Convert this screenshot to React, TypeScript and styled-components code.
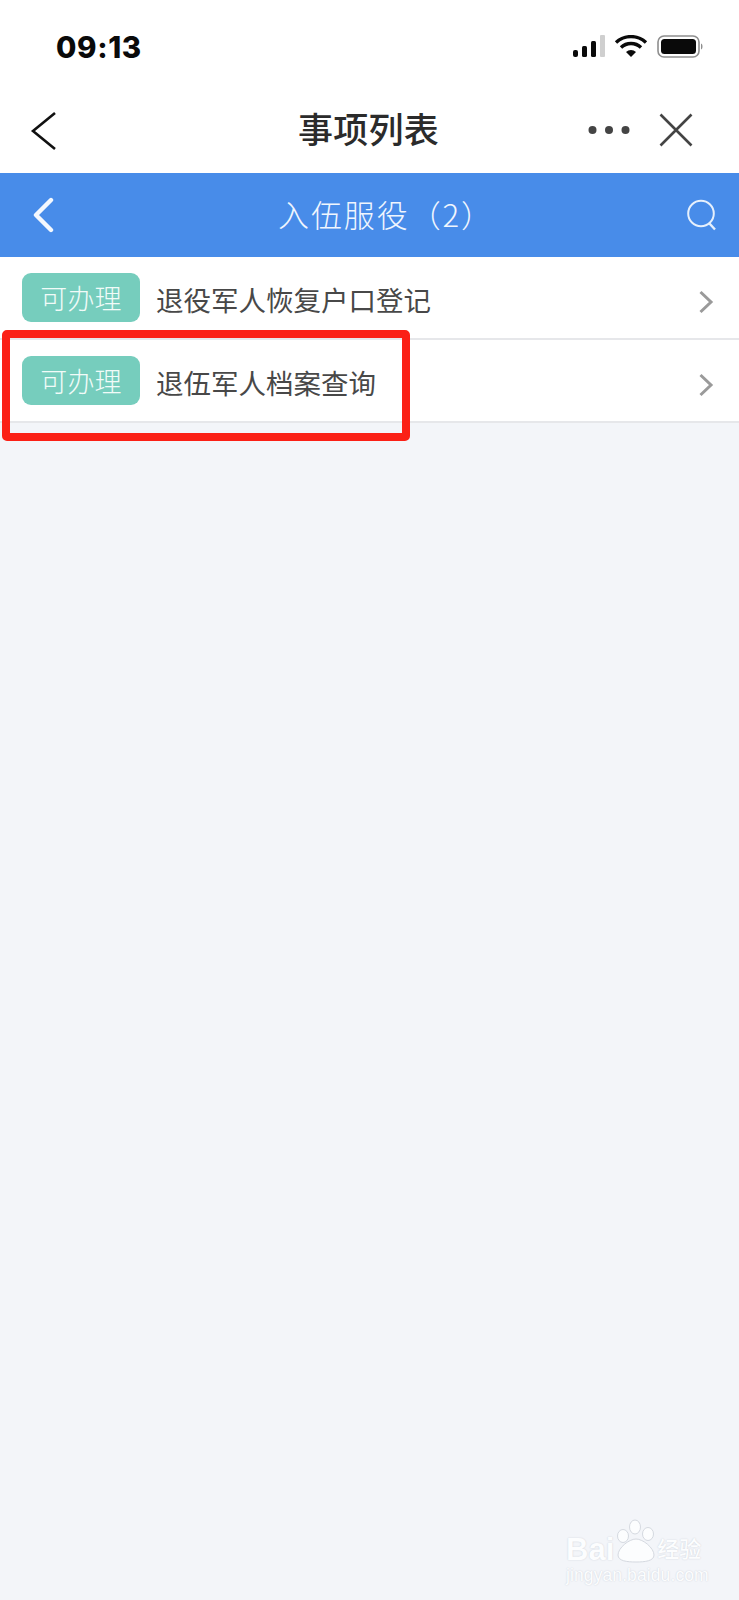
import React from "react";
import styled, { createGlobalStyle } from "styled-components";

const Global = createGlobalStyle`
  html, body { margin: 0; padding: 0; background: #f3f5f9; }
  #root { min-height: 1600px; }
`;
const CJK = `"Noto Sans CJK SC", "Noto Sans", sans-serif`;

const Page = styled.div`
  position: relative;
  width: 739px;
  height: 1600px;
  overflow: hidden;
  background: #f3f5f9;
  font-family: ${CJK};
`;
const StatusBar = styled.div`
  height: 88px;
  background: #fff;
  display: flex;
  align-items: flex-start;
  justify-content: space-between;
  padding: 29px 34px 0 56px;
  box-sizing: border-box;
`;
const Clock = styled.span`
  font-family: "Inter", "Liberation Sans", sans-serif;
  font-weight: 800;
  font-size: 29.5px;
  line-height: 36px;
  letter-spacing: 0.6px;
  color: #0a0a0a;
`;
const StatusIcons = styled.svg`
  width: 132px;
  height: 26px;
  margin-top: 6px;
  display: block;
`;
const NavBar = styled.div`
  height: 85px;
  background: #fff;
  display: grid;
  grid-template-columns: 1fr auto 1fr;
  align-items: center;
  padding: 0 46px 0 30px;
`;
const NavTitle = styled.h1`
  margin: -6px 0 0 14px;
  font-size: 35px;
  font-weight: 500;
  line-height: 44px;
  color: #2b2b2b;
  letter-spacing: 0.3px;
`;
const NavRight = styled.div`
  display: flex;
  justify-content: flex-end;
  align-items: center;
  gap: 29px;
  margin-top: -2px;
`;
const Glyph = styled.svg`
  display: block;
  flex: none;
`;
const Header = styled.div`
  height: 84px;
  background: #488ce9;
  display: grid;
  grid-template-columns: 1fr auto 1fr;
  align-items: center;
  padding: 0 21px 0 32px;
  box-sizing: border-box;
`;
const HeaderTitle = styled.h2`
  margin: -3px 0 0 22px;
  font-size: 31px;
  font-weight: 300;
  line-height: 42px;
  color: #f0f6fe;
  letter-spacing: 1.9px;
`;
const HeaderRight = styled.div`
  display: flex;
  justify-content: flex-end;
`;
const List = styled.div`
  display: flex;
  flex-direction: column;
`;
const Row = styled.div`
  height: 83px;
  box-sizing: border-box;
  background: #fff;
  border-bottom: 2px solid #e6e7ea;
  display: flex;
  align-items: center;
  padding: 0 25px 0 22px;
`;
const Badge = styled.span`
  width: 118px;
  height: 49px;
  border-radius: 9px;
  background: #76cdbd;
  color: #f1fbf8;
  font-size: 27px;
  font-weight: 300;
  line-height: 49px;
  padding-bottom: 1px;
  box-sizing: border-box;
  text-align: center;
  flex: none;
  letter-spacing: 0.2px;
`;
const RowLabel = styled.span`
  margin: 3px 0 0 16px;
  flex: 1;
  font-size: 27.5px;
  font-weight: 400;
  line-height: 40px;
  color: #484848;
`;
const ChevronBox = styled.svg`
  display: block;
  flex: none;
  margin-top: 9px;
`;
const Highlight = styled.div`
  position: absolute;
  left: 2px;
  top: 330px;
  width: 408px;
  height: 111px;
  box-sizing: border-box;
  border: 8px solid #fb2016;
  border-radius: 5px;
`;
const Watermark = styled.div`
  position: absolute;
  left: 566px;
  top: 1519px;
  width: 146px;
  color: #fcfdfe;
  text-shadow: 0 0 1.5px #c6cbd4;
`;
const WatermarkMain = styled.div`
  display: flex;
  align-items: flex-end;
  font-family: "Liberation Sans", sans-serif;
  font-weight: 700;
  font-size: 31px;
  line-height: 27px;
  height: 44px;
`;
const WatermarkCn = styled.span`
  font-family: ${CJK};
  font-size: 22px;
  line-height: 32px;
  font-weight: 500;
  margin-left: -1px;
`;
const WatermarkUrl = styled.div`
  font-family: "Liberation Sans", sans-serif;
  font-size: 17.5px;
  line-height: 20px;
  letter-spacing: 0.1px;
  margin-top: 2px;
  white-space: nowrap;
`;

const Chevron = () => (
  <ChevronBox width="16" height="24" viewBox="0 0 16 24" fill="none">
    <path d="M2.5 2 13 12 2.5 22" stroke="#9a9a9a" strokeWidth="3" />
  </ChevronBox>
);

const items = ["退役军人恢复户口登记", "退伍军人档案查询"];

export default function App() {
  return (
    <Page>
      <Global />
      <StatusBar>
        <Clock>09:13</Clock>
        <StatusIcons viewBox="0 0 132 26">
          <rect x="0" y="15" width="5" height="7" rx="2" fill="#0a0a0a" />
          <rect x="9" y="11" width="5" height="11" rx="1.5" fill="#0a0a0a" />
          <rect x="18" y="6" width="5" height="16" rx="1.5" fill="#0a0a0a" />
          <rect x="27" y="0" width="5" height="22" rx="1" fill="#cfcfcf" />
          <path d="M43 7.5a22 22 0 0 1 30 0" fill="none" stroke="#0a0a0a" strokeWidth="3.4" />
          <path d="M48 12.5a14.5 14.5 0 0 1 20 0" fill="none" stroke="#0a0a0a" strokeWidth="3.4" />
          <path d="M53 17a7.5 7.5 0 0 1 10 0l-5 5z" fill="#0a0a0a" />
          <rect x="85" y="1" width="41" height="21" rx="6" fill="none" stroke="#8e8e8e" strokeWidth="1.6" />
          <rect x="88" y="4" width="35" height="15" rx="3.5" fill="#0a0a0a" />
          <path d="M128 8.5c2 .5 2 5.5 0 6z" fill="#8e8e8e" />
        </StatusIcons>
      </StatusBar>
      <NavBar>
        <Glyph width="26" height="40" viewBox="0 0 26 40" fill="none">
          <path d="M25 2 3 20l22 18" stroke="#111" strokeWidth="2.6" />
        </Glyph>
        <NavTitle>事项列表</NavTitle>
        <NavRight>
          <Glyph width="42" height="12" viewBox="0 0 42 12" fill="#444">
            <circle cx="4.5" cy="6" r="4" />
            <circle cx="21" cy="6" r="4" />
            <circle cx="37.5" cy="6" r="4" />
          </Glyph>
          <Glyph width="34" height="34" viewBox="0 0 34 34" fill="none">
            <path d="M1.5 1.5l31 31M32.5 1.5l-31 31" stroke="#444" strokeWidth="2.6" />
          </Glyph>
        </NavRight>
      </NavBar>
      <Header>
        <Glyph width="22" height="36" viewBox="0 0 22 36" fill="none">
          <path d="M19 3 4 18l15 15" stroke="#f4f8fe" strokeWidth="4.4" strokeLinecap="round" strokeLinejoin="round" />
        </Glyph>
        <HeaderTitle>入伍服役（2）</HeaderTitle>
        <HeaderRight>
          <Glyph width="32" height="32" viewBox="0 0 32 32" fill="none">
            <circle cx="15" cy="14.5" r="12.8" stroke="#e6f0fc" strokeWidth="2" />
            <path d="M23 24l6 6.5" stroke="#e6f0fc" strokeWidth="2.4" />
          </Glyph>
        </HeaderRight>
      </Header>
      <List>
        {items.map((t) => (
          <Row key={t}>
            <Badge>可办理</Badge>
            <RowLabel>{t}</RowLabel>
            <Chevron />
          </Row>
        ))}
      </List>
      <Highlight />
      <Watermark>
        <WatermarkMain>
          Bai
          <Glyph width="44" height="44" viewBox="0 0 44 44" fill="#fcfdfe" stroke="#d5d9e0" strokeWidth="1">
            <ellipse cx="9" cy="17" rx="5.5" ry="6.5" />
            <ellipse cx="21" cy="8" rx="5.5" ry="7" />
            <ellipse cx="34" cy="15" rx="5.5" ry="6.5" />
            <path d="M22 20c7 0 18 9 18 16 0 6-9 7-18 7S4 42 4 36c0-7 11-16 18-16z" />
          </Glyph>
          <WatermarkCn>经验</WatermarkCn>
        </WatermarkMain>
        <WatermarkUrl>jingyan.baidu.com</WatermarkUrl>
      </Watermark>
    </Page>
  );
}
